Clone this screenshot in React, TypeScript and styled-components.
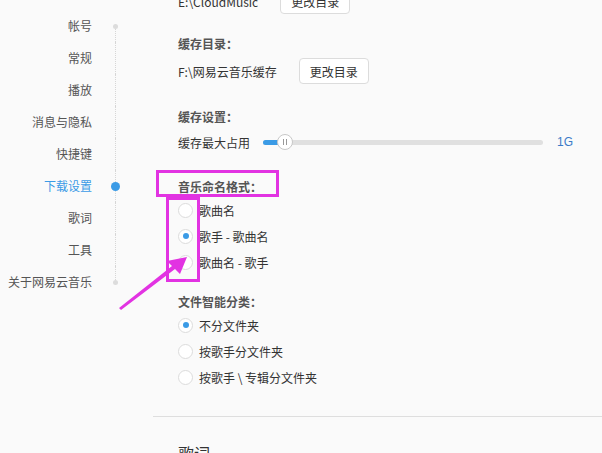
import styled, { createGlobalStyle } from 'styled-components';

const GlobalStyle = createGlobalStyle`
    html, body {
        margin: 0;
        padding: 0;
        background: #fafafa;
        overflow: hidden;
    }
    body {
        font-family: "Noto Sans CJK SC", "Liberation Sans", sans-serif;
        font-size: 12px;
        color: #333;
    }
`;

const Page = styled.div`
    position: relative;
    width: 602px;
    height: 453px;
    display: flex;
    overflow: hidden;
    background: #fafafa;
`;

const Sidebar = styled.div`
    width: 153px;
    flex-shrink: 0;
    display: flex;
    padding-top: 10px;
`;

const NavList = styled.ul`
    list-style: none;
    margin: 0;
    padding: 0;
    width: 92px;
    text-align: right;
`;

const NavItem = styled.li<{ $active?: boolean }>`
    height: 32px;
    line-height: 32px;
    font-size: 12px;
    white-space: nowrap;
    color: ${(p) => (p.$active ? '#3b9be6' : '#555')};
`;

const Track = styled.div`
    width: 46px;
    display: flex;
    flex-direction: column;
`;

const TrackCell = styled.div<{ $edge?: 'top' | 'bottom' }>`
    position: relative;
    height: 32px;
    display: flex;
    align-items: center;
    justify-content: center;
    &::before {
        content: '';
        position: absolute;
        left: 23px;
        top: ${(p) => (p.$edge === 'top' ? '16px' : '0')};
        bottom: ${(p) => (p.$edge === 'bottom' ? '16px' : '0')};
        border-left: 1px dotted #d6d6d6;
    }
`;

const Dot = styled.span<{ $active?: boolean }>`
    position: relative;
    margin-left: 1px;
    width: ${(p) => (p.$active ? '9px' : '5px')};
    height: ${(p) => (p.$active ? '9px' : '5px')};
    border-radius: 50%;
    background: ${(p) => (p.$active ? '#3b9be6' : '#dcdcdc')};
`;

const Content = styled.div`
    flex: 1;
    margin-top: -12px;
    display: flex;
    flex-direction: column;
`;

const Inner = styled.div`
    padding-left: 25px;
    display: flex;
    flex-direction: column;
`;

const Section = styled.section<{ $top: number }>`
    margin-top: ${(p) => p.$top}px;
    display: flex;
    flex-direction: column;
`;

const Heading = styled.h4`
    margin: 0;
    height: 20px;
    line-height: 20px;
    font-size: 12px;
    font-weight: bold;
    color: #555;
`;

const Row = styled.div<{ $h?: number; $gap?: number }>`
    height: ${(p) => p.$h ?? 26}px;
    display: flex;
    align-items: center;
    gap: ${(p) => p.$gap ?? 22}px;
    white-space: nowrap;
`;

const Path = styled.span`
    color: #333;
`;

const Button = styled.button`
    height: 26px;
    padding: 0 10px;
    border: 1px solid #dcdcdc;
    border-radius: 4px;
    background: #fff;
    font-family: inherit;
    font-size: 12px;
    color: #333;
`;

const SliderTrack = styled.div`
    position: relative;
    width: 280px;
    height: 5px;
    background: #e0e0e0;
    border-radius: 3px;
`;

const SliderFill = styled.div`
    height: 100%;
    background: #3b9be6;
    border-radius: 3px;
`;

const Thumb = styled.div`
    position: absolute;
    top: 50%;
    width: 14px;
    height: 14px;
    margin: -8px 0 0 -8px;
    border: 1px solid #c8c8c8;
    border-radius: 50%;
    background: #fff;
    display: flex;
    align-items: center;
    justify-content: center;
    gap: 2px;
    &::before,
    &::after {
        content: '';
        width: 1px;
        height: 6px;
        background: #999;
    }
`;

const SliderValue = styled.span`
    margin-left: 1px;
    color: #3b7bc8;
    font-family: "Liberation Sans", sans-serif;
`;

const RadioRow = styled.label`
    height: 26px;
    display: flex;
    align-items: center;
    gap: 6px;
    color: #333;
`;

const Radio = styled.span<{ $checked?: boolean }>`
    width: 15px;
    height: 15px;
    box-sizing: border-box;
    border: 1px solid #dcdcdc;
    border-radius: 50%;
    background: #fff;
    display: flex;
    align-items: center;
    justify-content: center;
    &::after {
        content: '';
        display: ${(p) => (p.$checked ? 'block' : 'none')};
        width: 6px;
        height: 6px;
        border-radius: 50%;
        background: #3b9be6;
    }
`;

const Divider = styled.hr`
    margin: 26px 0 0;
    border: none;
    border-top: 1px solid #dedede;
`;

const BigHeading = styled.h3`
    margin: 24px 0 0 25px;
    font-size: 16px;
    font-weight: normal;
    color: #333;
`;

const Mark = styled.div<{ $x: number; $y: number; $w: number; $h: number }>`
    position: absolute;
    left: ${(p) => p.$x}px;
    top: ${(p) => p.$y}px;
    width: ${(p) => p.$w}px;
    height: ${(p) => p.$h}px;
    box-sizing: border-box;
    border: 3px solid #e233e2;
    pointer-events: none;
`;

const Arrow = styled.svg`
    position: absolute;
    left: 0;
    top: 0;
    pointer-events: none;
`;

const navItems = ['帐号', '常规', '播放', '消息与隐私', '快捷键', '下载设置', '歌词', '工具', '关于网易云音乐'];
const activeIndex = 5;

const namingOptions = [
    { label: '歌曲名', checked: false },
    { label: '歌手 - 歌曲名', checked: true },
    { label: '歌曲名 - 歌手', checked: false },
];

const folderOptions = [
    { label: '不分文件夹', checked: true },
    { label: '按歌手分文件夹', checked: false },
    { label: '按歌手 \\ 专辑分文件夹', checked: false },
];

function App() {
    const cachePercent = 8;
    return (
        <>
            <GlobalStyle />
            <Page>
                <Sidebar>
                    <NavList>
                        {navItems.map((item, i) => (
                            <NavItem key={item} $active={i === activeIndex}>
                                {item}
                            </NavItem>
                        ))}
                    </NavList>
                    <Track>
                        {navItems.map((item, i) => {
                            const edge = i === 0 ? 'top' : i === navItems.length - 1 ? 'bottom' : undefined;
                            return (
                                <TrackCell key={item} $edge={edge}>
                                    {edge && <Dot />}
                                    {i === activeIndex && <Dot $active />}
                                </TrackCell>
                            );
                        })}
                    </Track>
                </Sidebar>

                <Content>
                    <Inner>
                        <Row>
                            <Path>E:\CloudMusic</Path>
                            <Button>更改目录</Button>
                        </Row>

                        <Section $top={20}>
                            <Heading>缓存目录：</Heading>
                            <Row style={{ marginTop: 4 }}>
                                <Path>F:\网易云音乐缓存</Path>
                                <Button>更改目录</Button>
                            </Row>
                        </Section>

                        <Section $top={23}>
                            <Heading>缓存设置：</Heading>
                            <Row $h={20} $gap={13} style={{ marginTop: 5 }}>
                                <span>缓存最大占用</span>
                                <SliderTrack>
                                    <SliderFill style={{ width: `${cachePercent}%` }} />
                                    <Thumb style={{ left: `${cachePercent}%` }} />
                                </SliderTrack>
                                <SliderValue>1G</SliderValue>
                            </Row>
                        </Section>

                        <Section $top={25}>
                            <Heading>音乐命名格式：</Heading>
                            {namingOptions.map((o) => (
                                <RadioRow key={o.label}>
                                    <Radio $checked={o.checked} />
                                    {o.label}
                                </RadioRow>
                            ))}
                        </Section>

                        <Section $top={17}>
                            <Heading>文件智能分类：</Heading>
                            {folderOptions.map((o) => (
                                <RadioRow key={o.label}>
                                    <Radio $checked={o.checked} />
                                    {o.label}
                                </RadioRow>
                            ))}
                        </Section>
                    </Inner>
                    <Divider />
                    <BigHeading>歌词</BigHeading>
                </Content>

                <Mark $x={156} $y={170} $w={123} $h={27} />
                <Mark $x={166} $y={197} $w={34} $h={85} />
                <Arrow width="602" height="453" viewBox="0 0 602 453">
                    <path d="M119 308 L172 266 L167 261 L187 257 L180 274 L175 269 L121 310 Z" fill="#e233e2" />
                </Arrow>
            </Page>
        </>
    );
}

export default App;
